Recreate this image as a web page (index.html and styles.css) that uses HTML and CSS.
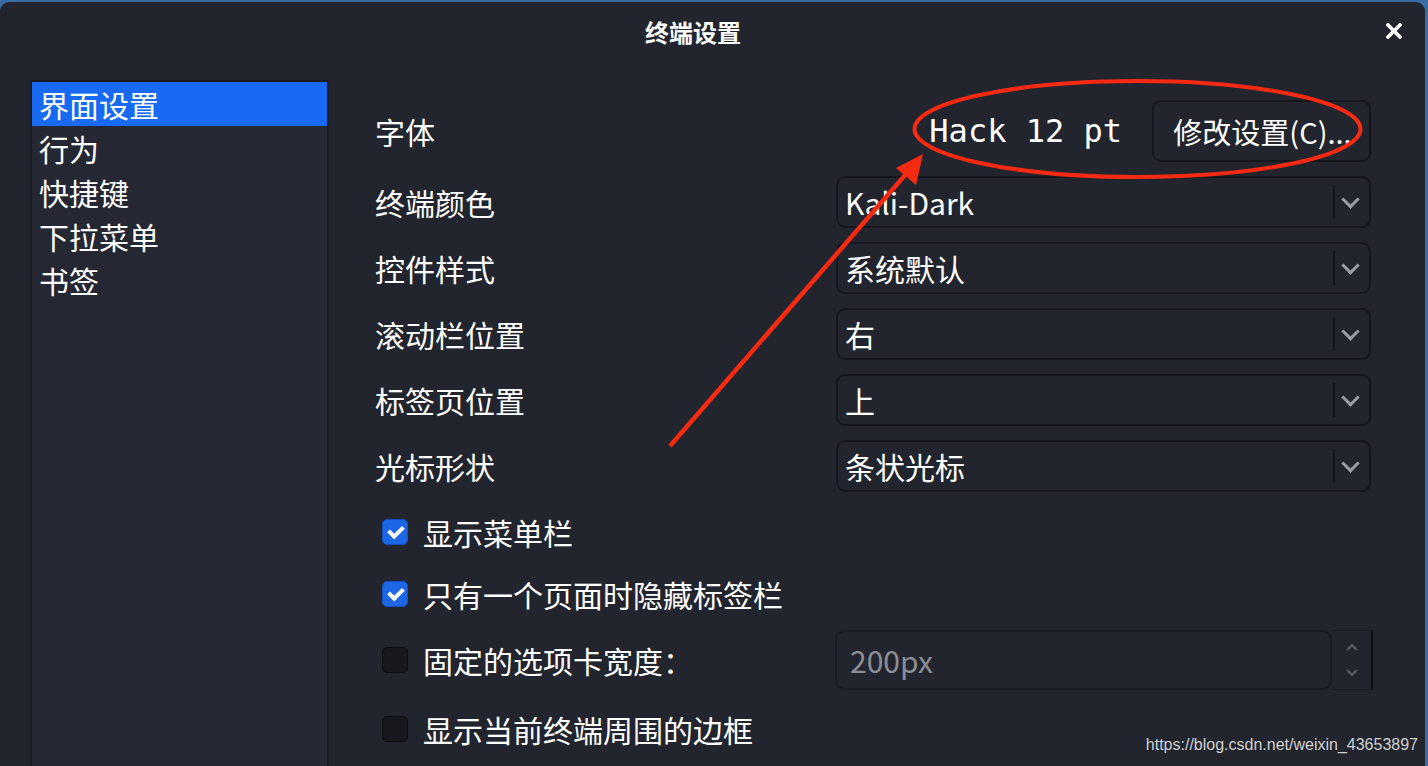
FILE: index.html
```html
<!DOCTYPE html>
<html lang="zh-CN">
<head>
  <meta charset="UTF-8">
  <meta name="viewport" content="width=device-width, initial-scale=1.0">
  <title>终端设置</title>
  <link rel="stylesheet" href="styles.css">
</head>
<body>
  <div class="window">
    <!-- title bar -->
    <div class="titlebar">
      <div class="title">终端设置</div>
      <svg class="close" width="16" height="16" viewBox="0 0 16 16">
        <path d="M2 2 L14 14 M14 2 L2 14" stroke="#fff" stroke-width="3.6" stroke-linecap="square"/>
      </svg>
    </div>

    <div class="content">
      <!-- left page list -->
      <ul class="sidebar">
        <li class="selected">界面设置</li>
        <li>行为</li>
        <li>快捷键</li>
        <li>下拉菜单</li>
        <li>书签</li>
      </ul>

      <!-- settings page -->
      <div class="main">
        <div class="font-row">
          <span class="label">字体</span>
          <span class="font-value">Hack 12 pt</span>
          <button class="btn">修改设置(C)...</button>
        </div>

        <div class="form-row">
          <span class="label">终端颜色</span>
          <div class="combo"><span>Kali-Dark</span><i class="arrow"></i></div>
        </div>
        <div class="form-row">
          <span class="label">控件样式</span>
          <div class="combo"><span>系统默认</span><i class="arrow"></i></div>
        </div>
        <div class="form-row">
          <span class="label">滚动栏位置</span>
          <div class="combo"><span>右</span><i class="arrow"></i></div>
        </div>
        <div class="form-row">
          <span class="label">标签页位置</span>
          <div class="combo"><span>上</span><i class="arrow"></i></div>
        </div>
        <div class="form-row">
          <span class="label">光标形状</span>
          <div class="combo"><span>条状光标</span><i class="arrow"></i></div>
        </div>

        <div class="check-row first">
          <span class="box checked"></span>
          <span>显示菜单栏</span>
        </div>
        <div class="check-row">
          <span class="box checked"></span>
          <span>只有一个页面时隐藏标签栏</span>
        </div>
        <div class="check-row spin-row">
          <div class="check-part">
            <span class="box"></span>
            <span>固定的选项卡宽度：</span>
          </div>
          <div class="spinbox">
            <div class="spin-field">200px</div>
            <div class="spin-buttons">
              <svg width="14" height="9" viewBox="0 0 14 9"><path d="M2 7 L7 2 L12 7" fill="none" stroke="#595c66" stroke-width="2"/></svg>
              <svg width="14" height="9" viewBox="0 0 14 9"><path d="M2 2 L7 7 L12 2" fill="none" stroke="#595c66" stroke-width="2"/></svg>
            </div>
          </div>
        </div>
        <div class="check-row last">
          <span class="box"></span>
          <span>显示当前终端周围的边框</span>
        </div>
      </div>
    </div>
  </div>

  <!-- annotation drawn over the screenshot -->
  <svg class="annotation" width="1428" height="766" viewBox="0 0 1428 766">
    <ellipse cx="1137.5" cy="129" rx="223" ry="48" fill="none" stroke="#f42a12" stroke-width="4"/>
    <line x1="670" y1="446" x2="906" y2="174" stroke="#f42a12" stroke-width="4.5"/>
    <polygon points="923,154 896,168 916,185" fill="#f42a12"/>
  </svg>

  <div class="watermark">https://blog.csdn.net/weixin_43653897</div>
</body>
</html>
```

FILE: styles.css
```css
body {
  margin: 0;
  height: 766px;
  overflow: hidden;
  background-color: #3a6da6;
  font-family: "Noto Sans CJK SC", "Noto Sans", sans-serif;
  color: #fff;
}
.window {
  margin: 2px 3px 0 0;
  height: 764px;
  background-color: #22252e;
  border-radius: 9px 9px 0 0;
  display: flex;
  flex-direction: column;
}
.titlebar {
  height: 58px;
  display: flex;
  align-items: center;
  padding-right: 23px;
}
.title {
  flex: 1;
  text-align: center;
  font-size: 24px;
  font-weight: bold;
}
.close {
  display: block;
}
.content {
  flex: 1;
  display: flex;
  padding: 20px 0 0 30px;
  min-height: 0;
}
.sidebar {
  list-style: none;
  margin: 0;
  padding: 0;
  width: 299px;
  box-sizing: border-box;
  background-color: #252733;
  border: 2px solid #191b21;
  border-bottom: none;
}
.sidebar li {
  height: 44px;
  line-height: 44px;
  padding-left: 7px;
  font-size: 30px;
}
.sidebar li.selected {
  background-color: #176af1;
}
.main {
  flex: 1;
  padding: 20px 54px 0 46px;
  font-size: 30px;
}
.label {
  display: block;
}
.font-row {
  height: 62px;
  display: flex;
  align-items: center;
}
.font-row .label {
  flex: 1;
}
.font-value {
  font-family: "DejaVu Sans Mono", monospace;
  font-size: 32px;
  margin-right: 30px;
}
.btn {
  width: 219px;
  height: 62px;
  box-sizing: border-box;
  background-color: #22252e;
  border: 2px solid #15171c;
  border-radius: 9px;
  color: #fff;
  font-family: inherit;
  font-size: 29px;
  padding: 0 0 0 2px;
}
.form-row {
  height: 52px;
  margin-top: 14px;
  display: flex;
  align-items: center;
}
.form-row .label {
  width: 461px;
}
.combo {
  flex: 1;
  height: 52px;
  box-sizing: border-box;
  border: 2px solid #15171c;
  border-radius: 9px;
  display: flex;
  align-items: center;
  padding-left: 7px;
}
.combo span {
  flex: 1;
}
.arrow {
  width: 34px;
  height: 34px;
  border-left: 2px solid #15171c;
  position: relative;
}
.arrow::after {
  content: "";
  position: absolute;
  left: 9px;
  top: 8px;
  width: 10px;
  height: 10px;
  border-right: 3px solid #9a9ca4;
  border-bottom: 3px solid #9a9ca4;
  transform: rotate(45deg);
}
.check-row {
  height: 62px;
  display: flex;
  align-items: center;
  padding-left: 7px;
}
.check-row.first {
  margin-top: 9px;
}
.check-part {
  width: 453px;
  display: flex;
  align-items: center;
}
.box {
  width: 26px;
  height: 26px;
  box-sizing: border-box;
  border-radius: 5px;
  background-color: #16181d;
  border: 1px solid #0c0d10;
  margin-right: 15px;
  position: relative;
  flex-shrink: 0;
}
.box.checked {
  background-color: #1d66e6;
  border-color: #1150c4;
}
.box.checked::after {
  content: "";
  position: absolute;
  left: 8px;
  top: 3px;
  width: 6px;
  height: 11px;
  border-right: 4px solid #fff;
  border-bottom: 4px solid #fff;
  transform: rotate(45deg);
}
.spin-row {
  height: 60px;
  margin-top: 5px;
}
.spinbox {
  display: flex;
  height: 60px;
  margin-right: -2px;
  flex: 1;
}
.spin-field {
  flex: 1;
  box-sizing: border-box;
  border: 2px solid #191b22;
  border-radius: 9px;
  padding-left: 13px;
  line-height: 56px;
  color: #8c8e95;
}
.spin-buttons {
  width: 41px;
  box-sizing: border-box;
  border-right: 2px solid #0d0e11;
  border-top: 1px solid #1a1c22;
  border-bottom: 1px solid #1a1c22;
  display: flex;
  flex-direction: column;
  justify-content: space-around;
  align-items: center;
  padding: 4px 0;
}
.spin-buttons svg {
  display: block;
}
.check-row.last {
  margin-top: 8px;
}
.annotation {
  position: absolute;
  left: 0;
  top: 0;
  pointer-events: none;
}
.watermark {
  position: absolute;
  right: 10px;
  top: 736px;
  font-family: "Liberation Sans", Arial, sans-serif;
  font-size: 16px;
  color: #d0d0d0;
}
```
